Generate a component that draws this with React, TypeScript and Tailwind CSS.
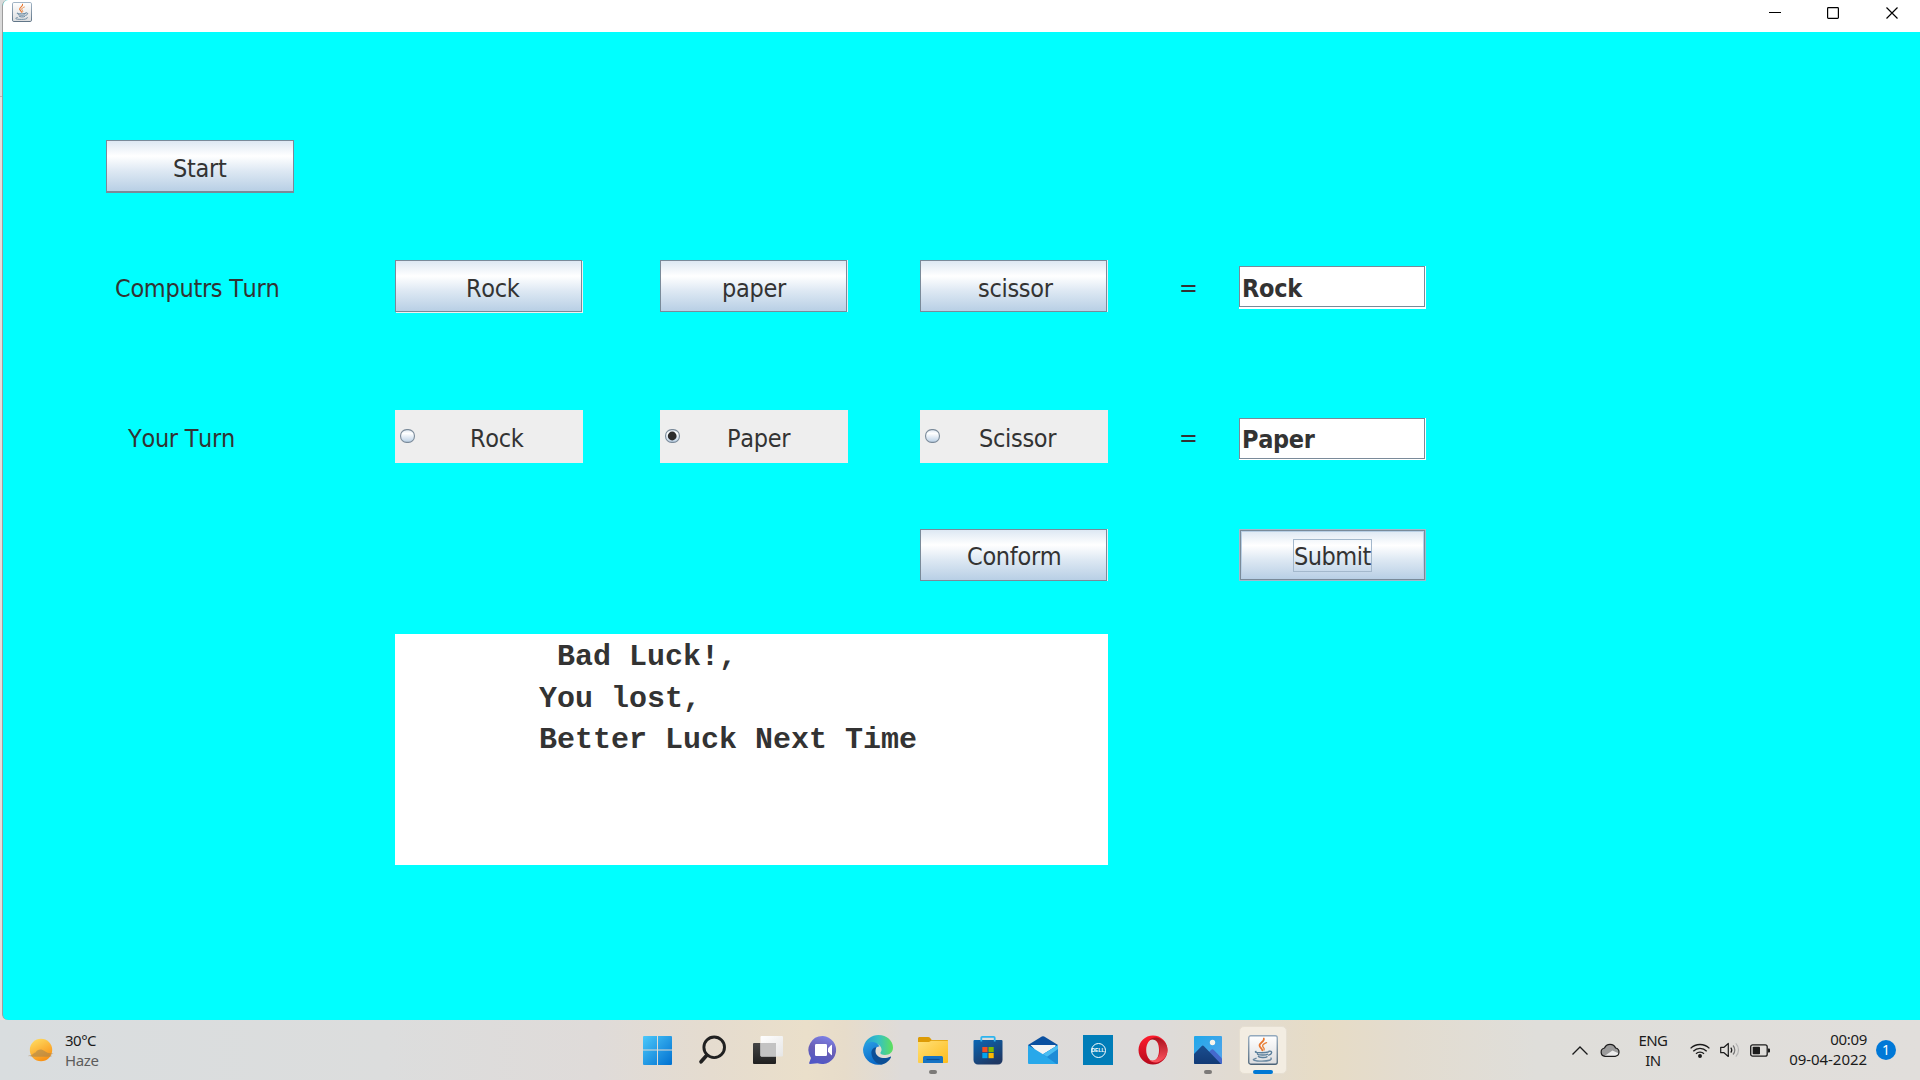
import React from "react";

const JavaIcon = ({ className }: { className: string }) => (
  <svg viewBox="0 0 30 30" className={className}>
    <defs>
      <linearGradient id="jbg" x1="0" y1="0" x2="0" y2="1">
        <stop offset="0" stopColor="#ffffff" />
        <stop offset="1" stopColor="#dcdddf" />
      </linearGradient>
      <linearGradient id="jbd" x1="0" y1="0" x2="0" y2="1">
        <stop offset="0" stopColor="#93a9bd" />
        <stop offset="1" stopColor="#4b6378" />
      </linearGradient>
    </defs>
    <rect x="0.75" y="0.75" width="28.5" height="28.5" rx="2" fill="url(#jbg)" stroke="url(#jbd)" strokeWidth="1.3" />
    <g fill="none" strokeLinecap="round">
      <path d="M15.800 3.500c1.200 3-4.600 4.200-4.300 7.200.2 1.800 2.400 2.600 2.800 4.600" stroke="#e8762d" strokeWidth="1.700" />
      <path d="M18.500 7.600c-2 .8-4.300 1.800-3.800 3.600.5 1.600 2.200 2 1.300 3.800" stroke="#ea8238" strokeWidth="1.400" />
      <path d="M8 16.400c-1.500.7-.5 1.300 5.800 1.300 3.500 0 5.500-.3 6.800-.8M9.400 18.800c.3 1.500 9 1.600 10 .4M10.400 21.300c.6 1.500 7.400 1.600 8.600.5" stroke="#5b7f9b" strokeWidth="1.400" />
      <path d="M21 16.200c3.600-.8 3.500 2.800-.4 3.900" stroke="#5b7f9b" strokeWidth="1.400" />
      <path d="M8 23.300c-5.800 1.600-1 2.800 6 2.800 7 0 10-1.300 9-3" stroke="#6b8aa3" strokeWidth="1.400" />
    </g>
  </svg>
);

const metal = "bg-[linear-gradient(180deg,#dde8f3_0%,#ffffff_30%,#dde8f3_60%,#b8cfe5_100%)]";
const swing = "font-['DejaVu_Sans_Condensed','DejaVu_Sans',sans-serif] [font-stretch:condensed] [font-kerning:none] text-[25px] text-[#333333] whitespace-pre tracking-[-0.3px]";

function MetalButton({ label, className = "", pad, shadow = "" }: { label: string; className?: string; pad: string; shadow?: string }) {
  return (
    <button className={`flex h-[52px] w-[187px] shrink-0 border border-[#7a8a99] text-left ${metal} ${swing} ${shadow} ${className}`}>
      <span className={`leading-[54px] ${pad}`}>{label}</span>
    </button>
  );
}

function Radio({ label, pad, checked = false, className = "" }: { label: string; pad: string; checked?: boolean; className?: string }) {
  return (
    <label className={`flex h-[53px] w-[188px] shrink-0 bg-[#eeeeee] pl-[5px] ${swing} ${className}`}>
      <svg viewBox="0 0 15 14" className="mt-[19px] h-[14px] w-[15px] shrink-0">
        <defs>
          <linearGradient id="rg" x1="0" y1="0" x2="0" y2="1">
            <stop offset="0" stopColor="#dde8f3" />
            <stop offset="0.3" stopColor="#ffffff" />
            <stop offset="1" stopColor="#b8cfe5" />
          </linearGradient>
        </defs>
        <rect x="0.6" y="0.6" width="13.800" height="12.800" rx="6" fill="url(#rg)" stroke="#7a8a99" strokeWidth="1.1" />
        {checked && <circle cx="7.200" cy="7" r="4.400" fill="#2d2d2d" />}
      </svg>
      <span className={`leading-[58px] ${pad}`}>{label}</span>
    </label>
  );
}

function Field({ value, className = "", line }: { value: string; className?: string; line: string }) {
  return (
    <div className={`w-[187px] shrink-0 bg-white pr-px ${className}`}>
      <div className={`h-full border border-[#7a8a99] pl-[2px] font-bold ${line} ${swing}`}>
        <span className="tracking-[-0.3px]">{value}</span>
      </div>
    </div>
  );
}

const Cell = ({ children, mark }: { children: React.ReactNode; mark?: React.ReactNode }) => (
  <div className="relative flex h-[60px] w-[55px] items-center justify-center">
    {children}
    {mark}
  </div>
);
const Dot = () => <span className="absolute bottom-[6px] h-1 w-2 rounded-full bg-[#7c7a78]" />;
const ico = "h-[30px] w-[30px]";

function TaskIcons() {
  return (
    <div className="flex">
      <Cell>
        <svg viewBox="0 0 30 30" className={`${ico} -ml-[2px]`}>
          <defs>
            <linearGradient id="win" x1="0" y1="0" x2="1" y2="1">
              <stop offset="0" stopColor="#4cc8fa" />
              <stop offset="1" stopColor="#0070d0" />
            </linearGradient>
          </defs>
          <path d="M2 1H15V14.500H1V2a1 1 0 0 1 1-1zM16 1h13a1 1 0 0 1 1 1v12.500H16zM1 15.500H15V30H2a1 1 0 0 1-1-1zM16 15.500h14V29a1 1 0 0 1-1 1H16z" fill="url(#win)" />
        </svg>
      </Cell>
      <Cell>
        <svg viewBox="0 0 30 30" className={`${ico} -ml-[2px]`} fill="none" stroke="#202020">
          <circle cx="17.200" cy="12.300" r="10.300" strokeWidth="2.900" />
          <path d="M9.800 20.200L4 26.800" strokeWidth="3.600" strokeLinecap="round" />
        </svg>
      </Cell>
      <Cell>
        <svg viewBox="0 0 30 30" className={ico}>
          <defs>
            <linearGradient id="tv" x1="0" y1="0" x2="0" y2="1">
              <stop offset="0" stopColor="#454545" />
              <stop offset="1" stopColor="#202020" />
            </linearGradient>
            <linearGradient id="tw" x1="0" y1="0" x2="1" y2="1">
              <stop offset="0" stopColor="#ffffff" />
              <stop offset="1" stopColor="#e6e6e6" />
            </linearGradient>
          </defs>
          <rect x="0" y="8" width="23" height="21" rx="1" fill="url(#tv)" />
          <rect x="7.500" y="1" width="22.500" height="20.500" rx="1" fill="url(#tw)" />
          <path d="M7.500 8H23v13.500H8.500a1 1 0 0 1-1-1z" fill="#c3c3c3" />
        </svg>
      </Cell>
      <Cell>
        <svg viewBox="0 0 30 30" className={ico}>
          <defs>
            <linearGradient id="chat" x1="0.7" y1="0" x2="0.4" y2="1">
              <stop offset="0" stopColor="#7d82e8" />
              <stop offset="0.5" stopColor="#6a5fb6" />
              <stop offset="1" stopColor="#5057c6" />
            </linearGradient>
          </defs>
          <path d="M15 1a14 14 0 1 1-5.500 27.200L2 29c-.8 0-1-.6-.8-1.200L3 23A14 14 0 0 1 15 1z" fill="url(#chat)" />
          <rect x="7" y="9" width="12" height="12" rx="1.200" fill="#fff" />
          <path d="M20 13.300l3.200-3.300c.4-.4.8-.2.8.3v9.400c0 .5-.4.7-.8.3L20 16.700z" fill="#fff" />
        </svg>
      </Cell>
      <Cell>
        <svg viewBox="0 0 30 30" className={ico}>
          <defs>
            <linearGradient id="e1" x1="0" y1="0.5" x2="1" y2="0.5">
              <stop offset="0" stopColor="#219bd8" />
              <stop offset="0.5" stopColor="#35c1c4" />
              <stop offset="1" stopColor="#5fe05a" />
            </linearGradient>
            <linearGradient id="e2" x1="0" y1="0" x2="0.5" y2="1">
              <stop offset="0" stopColor="#2aa0e6" />
              <stop offset="1" stopColor="#0867c6" />
            </linearGradient>
          </defs>
          <path d="M.8 11C3 4 8.600 0 15.500 0 24 0 30 6 30 12.500c0 4.800-3.600 7.500-8 7.500-3.200 0-5-1.200-4.600-2.200.3-.8 1.100-1.500 1.100-3.300 0-4-5-8.500-17.700-3.500z" fill="url(#e1)" />
          <path d="M.8 11C4 6.500 11 6 14.500 9c1.500 1.200 2 2.500 2 2.500-3-.5-5 2.500-5 6 0 6 4.500 12 10 11-11 4.500-21.500-3.500-21.500-14A12 12 0 0 1 .8 11z" fill="url(#e2)" />
          <path d="M13.500 12.300C10 12.500 8 15 8.500 19c.7 6 6 11 10.500 10.400 4-.6 7.500-4 9-7.200.2-.6-.3-.8-.9-.5-5.600 2.800-14 1-14.600-5 0-2 .4-3.300 1-4.400z" fill="#0c4f96" />
        </svg>
      </Cell>
      <Cell mark={<Dot />}>
        <svg viewBox="0 0 30 30" className={ico}>
          <defs>
            <linearGradient id="fo" x1="0" y1="0" x2="1" y2="1">
              <stop offset="0" stopColor="#ffe078" />
              <stop offset="1" stopColor="#fdbc1c" />
            </linearGradient>
          </defs>
          <path d="M0 3.500C0 2.600.7 2 1.500 2H10c1 0 1.800.4 2.400 1.200L13.700 5H29c.6 0 1 .4 1 1v5H0z" fill="#dd9b05" />
          <path d="M0 7h11l2.200-1.200H30V27a1 1 0 0 1-1 1H1a1 1 0 0 1-1-1z" fill="url(#fo)" />
          <path d="M5 28v-5.500A1.500 1.500 0 0 1 6.500 21h17a1.500 1.500 0 0 1 1.500 1.500V28z" fill="#1673c4" />
          <path d="M8.500 24.500h13" stroke="#0b4f95" strokeWidth="1.200" />
        </svg>
      </Cell>
      <Cell>
        <svg viewBox="0 0 30 30" className={`${ico} -ml-px`}>
          <defs>
            <linearGradient id="st" x1="0" y1="0" x2="0.6" y2="1">
              <stop offset="0" stopColor="#0a67b5" />
              <stop offset="1" stopColor="#1f3864" />
            </linearGradient>
          </defs>
          <path d="M.5 6a1 1 0 0 1 1-1h27a1 1 0 0 1 1 1v19a4.500 4.500 0 0 1-4.500 4.500H5A4.500 4.500 0 0 1 .5 25z" fill="url(#st)" />
          <path d="M8.300 6.500V2.800c0-.5.400-1 1-1h11.400c.6 0 1 .5 1 1v3.700" fill="none" stroke="#2cb4ee" strokeWidth="1.800" />
          <path d="M9.300 12h5.200v5.200H9.300z" fill="#f25022" />
          <path d="M15.500 12h5.200v5.200h-5.200z" fill="#7fba00" />
          <path d="M9.300 18h5.200v5.200H9.300z" fill="#00a4ef" />
          <path d="M15.500 18h5.200v5.200h-5.200z" fill="#ffb900" />
        </svg>
      </Cell>
      <Cell>
        <svg viewBox="0 0 30 30" className={ico}>
          <path d="M0 10L13.800 1.600a2.400 2.400 0 0 1 2.400 0L30 10v4H0z" fill="#0a50a0" />
          <path d="M2.500 10h25v9l-12.500 4z" fill="#f4f4f4" />
          <path d="M0 10l15 9.300 15-9.300v18a1 1 0 0 1-1 1H1a1 1 0 0 1-1-1z" fill="#28a8ea" />
          <path d="M15 19.300L30 10v18a1 1 0 0 1-1 1h-.5z" fill="#1d8bd6" />
          <path d="M15 19.300L30 10v4L19 21.800z" fill="#49bdf2" />
        </svg>
      </Cell>
      <Cell>
        <div className="flex h-[30px] w-[30px] items-center justify-center bg-[#007db8]">
          <div className="flex h-[15px] w-[15px] items-center justify-center rounded-full border border-white font-['Liberation_Sans',sans-serif] text-[5px] font-bold leading-none text-white">DELL</div>
        </div>
      </Cell>
      <Cell>
        <svg viewBox="0 0 30 30" className={ico}>
          <defs>
            <linearGradient id="op" x1="0" y1="0" x2="0" y2="1">
              <stop offset="0" stopColor="#ff1b2d" />
              <stop offset="1" stopColor="#b5091c" />
            </linearGradient>
            <linearGradient id="op2" x1="0" y1="0" x2="0" y2="1">
              <stop offset="0" stopColor="#a8101d" />
              <stop offset="1" stopColor="#ff5560" />
            </linearGradient>
          </defs>
          <path fillRule="evenodd" d="M15 .5a14.500 14.500 0 1 0 0 29 14.500 14.500 0 0 0 0-29zM15 4c3.700 0 6 5 6 11s-2.300 11-6 11-6.800-5-6.800-11S11.300 4 15 4z" fill="url(#op)" />
          <path d="M11 5.200C13 3 16 2 19 2.600c6 1.500 10.500 6.500 10.500 12.400S25 26 19 27.400c-3 .6-6-.4-8-2.600 6 2.500 11-2.500 11-9.800s-5-12.300-11-9.800z" fill="url(#op2)" />
        </svg>
      </Cell>
      <Cell mark={<Dot />}>
        <svg viewBox="0 0 30 30" className={ico}>
          <defs>
            <linearGradient id="ph" x1="0" y1="0" x2="1" y2="1">
              <stop offset="0" stopColor="#20a8ea" />
              <stop offset="1" stopColor="#57a3ea" />
            </linearGradient>
            <linearGradient id="pm" x1="0" y1="0" x2="0" y2="1">
              <stop offset="0" stopColor="#1a4e90" />
              <stop offset="1" stopColor="#123a75" />
            </linearGradient>
            <clipPath id="pc">
              <rect x="1" y="1" width="28" height="28" rx="1" />
            </clipPath>
          </defs>
          <g clipPath="url(#pc)">
            <path d="M1 1h28v28H1z" fill="url(#ph)" />
            <path d="M14 19l4-4a2 2 0 0 1 2.800 0L29 23.500V29H20z" fill="#4569cc" />
            <path d="M1 19l7.500-7.700a1.700 1.700 0 0 1 2.500 0L28 29H1z" fill="url(#pm)" />
            <circle cx="19.500" cy="7.500" r="2.700" fill="#f7f4ec" />
          </g>
        </svg>
      </Cell>
      <Cell mark={<span className="absolute bottom-[6px] h-1 w-5 rounded-full bg-[#0078d4]" />}>
        <div className="flex h-12 w-12 items-center justify-center rounded-[5px] border border-[#e6dfd2] bg-[#f3ede2]">
          <JavaIcon className={ico} />
        </div>
      </Cell>
    </div>
  );
}

function Tray() {
  return (
    <div className="flex h-full items-center font-['Noto_Sans',sans-serif] text-[15px] leading-5 tracking-[-0.55px] text-[#1b1b1b]">
      <svg viewBox="0 0 16 9" className="h-[9px] w-4" fill="none" stroke="#1b1b1b" strokeWidth="1.300">
        <path d="M.5 8.500L8 1l7.500 7.500" />
      </svg>
      <svg viewBox="0 0 20 14" className="ml-3 h-[14px] w-5">
        <path d="M5 13.300a4.200 4.200 0 0 1-.5-8.300A6 6 0 0 1 15.600 5a4.200 4.200 0 0 1-.4 8.300z" fill="#9b9b9b" />
        <path d="M4.500 13l8-5.500 6.500 3c-.5 2-2 2.800-3.800 2.800H5z" fill="#ececec" />
        <path d="M5 13.300a4.200 4.200 0 0 1-.5-8.300A6 6 0 0 1 15.600 5a4.200 4.200 0 0 1-.4 8.300z" fill="none" stroke="#1b1b1b" strokeWidth="1.200" />
      </svg>
      <div className="ml-[17px] w-[32px] text-center">
        <div>ENG</div>
        <div>IN</div>
      </div>
      <svg viewBox="0 0 20 15" className="ml-[21px] h-[15px] w-5" fill="none" stroke="#1b1b1b" strokeWidth="1.300">
        <path d="M.6 5.400a13.300 13.300 0 0 1 18.800 0M3.300 8.200a9.500 9.500 0 0 1 13.400 0M6 10.800a5.700 5.700 0 0 1 8 0" />
        <circle cx="10" cy="13" r="1.300" fill="#1b1b1b" />
      </svg>
      <svg viewBox="0 0 20 16" className="ml-[10px] h-4 w-5" fill="none" stroke="#1b1b1b" strokeWidth="1.200">
        <path d="M.7 5.300H4L8.300 1.500v13L4 10.700H.7z" strokeLinejoin="round" />
        <path d="M10.800 5.500a4 4 0 0 1 0 5" />
        <path d="M13 3.500a6.500 6.500 0 0 1 0 9" stroke="#777" />
        <path d="M15.800 1.300a9.600 9.600 0 0 1 0 13.400" stroke="#b5b5b5" />
      </svg>
      <svg viewBox="0 0 20 13" className="ml-[10px] h-[13px] w-5">
        <rect x="0.7" y="0.8" width="16.500" height="11.400" rx="2" fill="none" stroke="#1b1b1b" strokeWidth="1.300" />
        <rect x="2.700" y="2.800" width="7.300" height="7.400" rx="0.8" fill="#1b1b1b" />
        <path d="M18 4.500h1.200c.4 0 .8.400.8.800v2.400c0 .4-.4.8-.8.800H18z" fill="#1b1b1b" />
      </svg>
      <div className="ml-[17px] w-[80px] whitespace-nowrap pb-[2px] text-right">
        <div className="tracking-[-0.3px]">00:09</div>
        <div className="tracking-[-0.05px]">09-04-2022</div>
      </div>
      <div className="ml-[9px] mr-[24px] flex h-5 w-5 items-center justify-center rounded-full bg-[#0078d7] text-[14px] tracking-normal text-white">1</div>
    </div>
  );
}

export default function App() {
  return (
    <div className="flex h-[1080px] w-[1920px] flex-col overflow-hidden bg-[#d9dcdc]">
      <div className="flex h-[1020px] bg-[linear-gradient(180deg,#dadada_0,#dadada_96px,#bcb5b5_96px,#bcb5b5_97px,#e3dedb_97px)]">
        <div className="ml-[2px] flex flex-1 flex-col overflow-hidden rounded-l-md border-l border-[#9d9d9d] bg-[#00ffff]">
          <header className="flex h-8 shrink-0 bg-white pl-[9px]">
            <JavaIcon className="mt-[2px] h-5 w-5" />
            <div className="ml-auto mr-[21px] mt-[7px] flex gap-[46px]">
              <svg viewBox="0 0 13 13" className="-mr-px h-[13px] w-[13px]"><path d="M0 5.500h12" stroke="#000" /></svg>
              <svg viewBox="0 0 13 13" className="h-[13px] w-[13px]"><rect x="0.600" y="0.600" width="10.800" height="10.800" rx="0.800" fill="none" stroke="#000" strokeWidth="1.200" /></svg>
              <svg viewBox="0 0 13 13" className="h-[13px] w-[13px]"><path d="M.5.500l11 11M11.500.500l-11 11" stroke="#000" strokeWidth="1.200" /></svg>
            </div>
          </header>

          <main className="flex flex-col">
            <MetalButton label="Start" pad="pl-[66px] pt-px" className="mt-[108px] ml-[103px] h-[53px] w-[188px] border-b-2" />

            <div className="mt-[67px] flex h-[53px] pl-[112px]">
              <span className={`w-[280px] leading-[58px] ${swing}`}>Computrs Turn</span>
              <MetalButton label="Rock" pad="pl-[70px] pt-px" shadow="shadow-[1px_1px_0_#f0f0f0]" />
              <MetalButton label="paper" pad="pl-[61px] pt-px" className="ml-[78px]" shadow="shadow-[1px_0_0_#e8f0f4]" />
              <MetalButton label="scissor" pad="pl-[57px] pt-px" className="ml-[73px]" shadow="shadow-[1px_0_0_#e8f0f4]" />
              <span className={`ml-[72px] w-[60px] leading-[56px] ${swing}`}>=</span>
              <Field value="Rock" className="mt-[6px] h-[43px] pb-[2px]" line="leading-[44px]" />
            </div>

            <div className="mt-[97px] flex h-[53px] pl-[125px]">
              <span className={`w-[267px] leading-[58px] ${swing}`}>Your Turn</span>
              <Radio label="Rock" pad="pl-[55px]" />
              <Radio label="Paper" pad="pl-[47px]" className="ml-[77px]" checked />
              <Radio label="Scissor" pad="pl-[39px]" className="ml-[72px]" />
              <span className={`ml-[71px] w-[60px] leading-[56px] ${swing}`}>=</span>
              <Field value="Paper" className="mt-[8px] h-[42px] pb-px" line="leading-[42px]" />
            </div>

            <div className="mt-[66px] flex h-[52px] pl-[917px]">
              <MetalButton label="Conform" pad="pl-[46px]" shadow="shadow-[1px_0_0_#e8f0f4]" />
              <div className="ml-[132px] h-[52px] w-[187px] border border-[#a3b8cc]">
                <button className={`flex h-full w-full justify-center border border-[#7a8a99] shadow-[inset_0_0_0_1px_#b8cfe5] ${metal} ${swing}`}>
                  <span className="mt-[8px] flex h-[33px] w-[79px] border border-[#a3b8cc] leading-[33px] tracking-[-0.5px]">Submit</span>
                </button>
              </div>
            </div>

            <div className="mt-[53px] ml-[392px] h-[231px] w-[713px] whitespace-pre bg-white pt-[3px] pl-[144px] font-['Liberation_Mono',monospace] text-[30px] font-bold leading-[41.500px] text-[#333333]">
              {" Bad Luck!,\nYou lost,\nBetter Luck Next Time"}
            </div>
          </main>
        </div>
      </div>

      <footer className="grid h-[60px] grid-cols-[630.5px_660px_629.5px] bg-[linear-gradient(90deg,#d9dddf_0%,#dcdddd_20%,#dfdbd9_31%,#e5dccf_37%,#eadfca_42%,#e7dcca_44%,#dedbd9_47%,#dddbda_60%,#e2dbd0_65%,#e7dcc5_69%,#e3dccf_73%,#dfdeda_80%,#e1dedb_100%)]">
        <div className="flex items-center pl-[28px] font-['Noto_Sans',sans-serif] text-[15px] leading-5 tracking-[-0.5px]">
          <svg viewBox="0 0 26 24" className="h-6 w-[26px]">
            <defs>
              <linearGradient id="sun" x1="0.2" y1="0" x2="0.7" y2="1">
                <stop offset="0" stopColor="#ffdb60" />
                <stop offset="1" stopColor="#f98d10" />
              </linearGradient>
            </defs>
            <circle cx="13" cy="12" r="11.200" fill="url(#sun)" />
            <path d="M5 16c1-1.500 2.500-1 3-2 1-3 6-3.500 8.500-1 1 1 2 .8 3 1.800 1 .6 5 .6 6 .8-1 1-3 .8-4 1.200 1 1 2 .8 2.500 1.400-4 1-20 .8-24-.200 1-.8 4-.5 5-2z" fill="#a98550" fillOpacity="0.6" />
          </svg>
          <div className="ml-[11px]">
            <div className="text-[#1b1b1b]">30°C</div>
            <div className="text-[#5c5c5c] tracking-[-0.4px]">Haze</div>
          </div>
        </div>
        <TaskIcons />
        <div className="flex justify-end"><Tray /></div>
      </footer>
    </div>
  );
}
